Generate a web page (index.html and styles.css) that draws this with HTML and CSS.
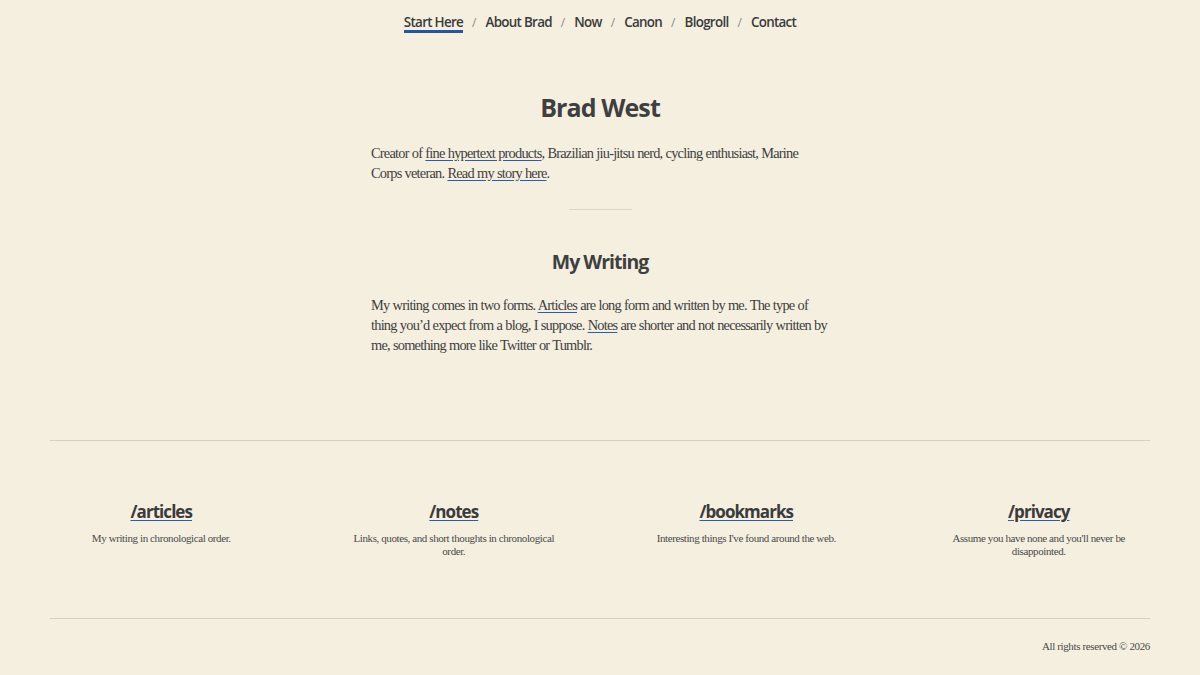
FILE: index.html
```html
<!DOCTYPE html>
<html lang="en">
<head>
<meta charset="utf-8">
<title>Brad West</title>
<link rel="stylesheet" href="styles.css">
</head>
<body>
<nav class="nav">
  <a class="nav-link active" href="#">Start Here</a><span class="sep">/</span>
  <a class="nav-link" href="#">About Brad</a><span class="sep">/</span>
  <a class="nav-link" href="#">Now</a><span class="sep">/</span>
  <a class="nav-link" href="#">Canon</a><span class="sep">/</span>
  <a class="nav-link" href="#">Blogroll</a><span class="sep">/</span>
  <a class="nav-link" href="#">Contact</a>
</nav>
<main class="main">
  <h1 class="title">Brad West</h1>
  <p class="text">Creator of <a href="#">fine hypertext products</a>, Brazilian jiu-jitsu nerd, cycling enthusiast, Marine Corps veteran. <a href="#">Read my story here</a>.</p>
  <hr class="divider">
  <h2 class="subtitle">My Writing</h2>
  <p class="text">My writing comes in two forms. <a href="#">Articles</a> are long form and written by me. The type of thing you’d expect from a blog, I suppose. <a href="#">Notes</a> are shorter and not necessarily written by me, something more like Twitter or Tumblr.</p>
</main>
<footer class="footer">
  <div class="cols">
    <div class="col">
      <a class="col-title" href="#">/articles</a>
      <p class="col-desc">My writing in chronological order.</p>
    </div>
    <div class="col">
      <a class="col-title" href="#">/notes</a>
      <p class="col-desc">Links, quotes, and short thoughts in chronological order.</p>
    </div>
    <div class="col">
      <a class="col-title" href="#">/bookmarks</a>
      <p class="col-desc">Interesting things I've found around the web.</p>
    </div>
    <div class="col">
      <a class="col-title" href="#">/privacy</a>
      <p class="col-desc">Assume you have none and you'll never be disappointed.</p>
    </div>
  </div>
  <div class="copy">All rights reserved © 2026</div>
</footer>
</body>
</html>
```
FILE: styles.css
```css
html, body {
  margin: 0;
  padding: 0;
  background: #f5efe0;
  color: #3f3f3f;
}
body {
  font-family: "Liberation Serif", "Times New Roman", serif;
}
a {
  color: inherit;
}
.nav {
  display: flex;
  justify-content: center;
  align-items: center;
  height: 44px;
  gap: 9px;
  font-family: "Open Sans", "Noto Sans", sans-serif;
  font-weight: 600;
  font-size: 13.4px;
  letter-spacing: -0.7px;
}
.nav-link {
  text-decoration: none;
  color: #3b3b3b;
  line-height: 18px;
}
.nav-link.active {
  border-bottom: 3px solid #2456a6;
  line-height: 16px;
  padding-top: 2px;
}
.sep {
  color: #8a8a8a;
  font-weight: 400;
  font-size: 12px;
  letter-spacing: 0;
}
.main {
  width: 458px;
  margin: 0 auto;
  padding-top: 47px;
  padding-bottom: 85px;
}
.title {
  font-family: "Open Sans", "Noto Sans", sans-serif;
  font-weight: 700;
  font-size: 25px;
  letter-spacing: -0.9px;
  text-align: center;
  margin: 0 0 20px;
  line-height: 32px;
}
.subtitle {
  font-family: "Open Sans", "Noto Sans", sans-serif;
  font-weight: 700;
  font-size: 19.5px;
  letter-spacing: -1px;
  text-align: center;
  margin: 0 0 20px;
  line-height: 26px;
}
.text {
  font-size: 14.4px;
  letter-spacing: -0.78px;
  word-spacing: 0.3px;
  line-height: 20px;
  margin: 0;
}
.text a {
  text-decoration-color: #2a5db0;
  text-underline-offset: 2px;
}
.divider {
  width: 63px;
  border: 0;
  border-top: 1px solid #dcd6c8;
  margin: 26px auto 39px;
}
.footer {
  margin: 0 50px;
  border-top: 1px solid #d6d0c2;
}
.cols {
  display: grid;
  grid-template-columns: repeat(4, 1fr);
  column-gap: 70px;
  padding: 60px 0 61px;
  border-bottom: 1px solid #d6d0c2;
}
.col {
  display: flex;
  flex-direction: column;
  align-items: center;
  text-align: center;
}
.col-title {
  font-family: "Open Sans", "Noto Sans", sans-serif;
  font-weight: 700;
  font-size: 17px;
  letter-spacing: -0.95px;
  line-height: 22px;
  color: #3b3b3b;
  text-decoration-color: #2a5db0;
  text-underline-offset: 2px;
}
.col-desc {
  font-size: 11px;
  letter-spacing: -0.4px;
  line-height: 12.5px;
  margin: 9px 0 0;
  padding: 0 8px;
  color: #4a4a4a;
}
.copy {
  text-align: right;
  font-size: 11px;
  letter-spacing: -0.37px;
  padding-top: 21px;
  color: #4a4a4a;
}
```
